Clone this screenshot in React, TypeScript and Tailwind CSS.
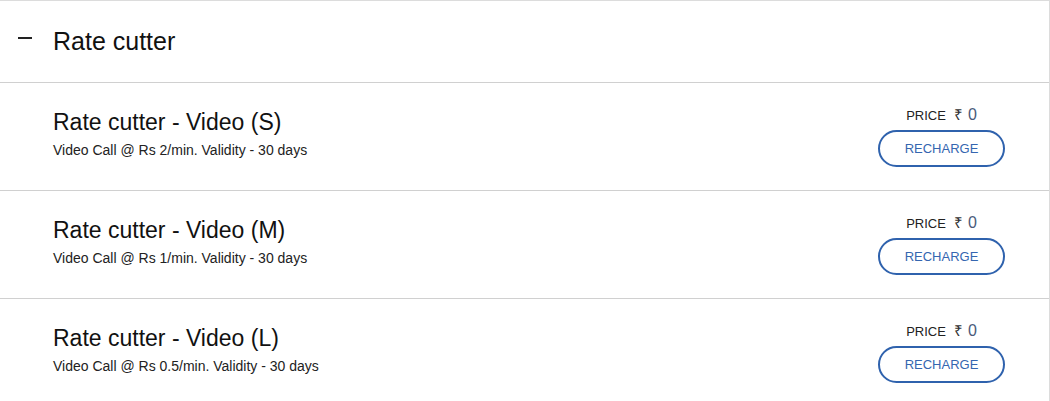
import React from "react";

const plans = [
  { name: "Rate cutter - Video (S)", desc: "Video Call @ Rs 2/min. Validity - 30 days", price: 0 },
  { name: "Rate cutter - Video (M)", desc: "Video Call @ Rs 1/min. Validity - 30 days", price: 0 },
  { name: "Rate cutter - Video (L)", desc: "Video Call @ Rs 0.5/min. Validity - 30 days", price: 0 },
];

export default function App() {
  return (
    <div
      className="w-[1050px] h-[401px] overflow-hidden bg-white border-t border-r border-[#dcdcdc] text-[#111]"
      style={{ fontFamily: '"Liberation Sans", Arial, sans-serif' }}
    >
      <div className="h-[82px] flex items-center border-b border-[#d0d0d0]">
        <span className="w-[14px] h-[2px] bg-[#222] ml-[18px] mr-[21px] -mt-[8px]" />
        <h2 className="text-[25px] leading-none">Rate cutter</h2>
      </div>

      {plans.map((p, i) => (
        <div
          key={i}
          className="h-[108px] flex items-center justify-between border-b border-[#d0d0d0] pl-[53px] pr-[44px]"
        >
          <div className="flex flex-col -mt-[6px]">
            <p className="text-[23px] leading-[28px]">{p.name}</p>
            <p className="text-[14px] leading-[18px] mt-[5px] text-[#222]">{p.desc}</p>
          </div>
          <div className="flex flex-col items-center w-[127px] -mt-[3px]">
            <div className="flex items-baseline h-[20px]">
              <span className="text-[13px] text-[#222]">PRICE</span>
              <span className="text-[15px] text-[#333] ml-[8px]">₹</span>
              <span className="text-[16px] text-[#4a5a7a] ml-[5px]">{p.price}</span>
            </div>
            <button className="mt-[7px] w-[127px] h-[37px] rounded-full border-2 border-[#2f62ad] text-[#3566b0] text-[13px] bg-white">
              RECHARGE
            </button>
          </div>
        </div>
      ))}
    </div>
  );
}
